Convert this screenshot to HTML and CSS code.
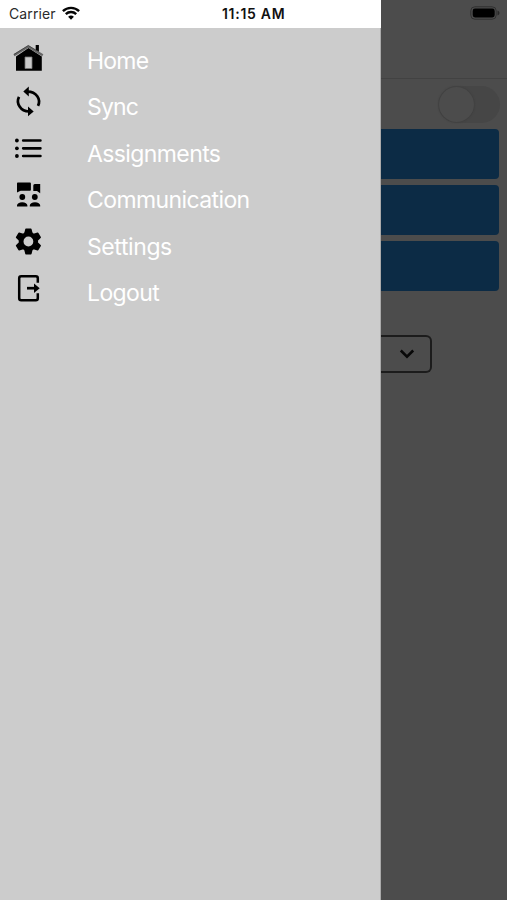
FILE: index.html
```html
<!DOCTYPE html>
<html lang="en">
<head>
<meta charset="utf-8">
<title>Menu</title>
<link rel="stylesheet" href="styles.css">
</head>
<body>
<div class="screen">
  <aside class="drawer">
    <header class="status">
      <span class="carrier">Carrier</span>
      <svg class="wifi" width="18" height="14" viewBox="0 0 18 14" fill="none" stroke="#050505" stroke-width="2.4"><path d="M.9 5.1a11.7 11.7 0 0 1 16.2 0M3.8 8.1a7.5 7.5 0 0 1 10.4 0"/><path d="M9 13.7 6.1 10.8a4.2 4.2 0 0 1 5.800 0z" fill="#050505" stroke="none"/></svg>
      <span class="time">11:15 AM</span>
    </header>
    <nav class="menu">
      <a class="item"><svg class="icon" viewBox="0 0 32 32"><path d="M4 15.500 16.500 7 29.800 15.500v14.200H4z"/><path d="M23.700 4h3.200v9l-3.200-2.500z"/><path d="M2 14.300 16.300 5.500l14.500 8.800" fill="none" stroke="#666" stroke-width="2.200"/><path d="M2 13.400 16.300 4.500l9 5.500" fill="none" stroke="#333" stroke-width=".7"/><path d="M13 16h7v11.500h-7z" fill="#c9c9c9" stroke="#777" stroke-width=".8"/></svg><span class="label home">Home</span></a>
      <a class="item"><svg class="icon" viewBox="0 0 32 32"><path d="M7 9.800C3.800 16 8.500 24.500 17 24.500M15.500 4.600c8.800 0 13.800 7.500 10.500 14.300" fill="none" stroke="#000" stroke-width="2.700"/><path d="m16.800-.5-5.500 5.100 5.500 5zM16 19.400l5.700 5.100-5.700 4.700z"/></svg><span class="label sync">Sync</span></a>
      <a class="item"><svg class="icon" viewBox="0 0 32 32"><circle cx="4.900" cy="6.500" r="1.900"/><circle cx="4.900" cy="14.300" r="1.900"/><circle cx="4.900" cy="22" r="1.900"/><path d="M11.200 6.500h17.200M11.200 14.300h17.200M11.200 22h17.200" stroke="#000" stroke-width="2.700" stroke-linecap="round"/></svg><span class="label assignments">Assignments</span></a>
      <a class="item"><svg class="icon" viewBox="0 0 32 32"><path d="M5.800 2.600H18q.9 0 .9.900v6.300q0 .9-.9.900H8.600L5 12.500V3.500q0-.9.800-.9zM22.800 4h5.400v9.200L25 11h-3.700V5.500q0-1.500 1.500-1.500z"/><circle cx="10.300" cy="17" r="2.900"/><circle cx="22.800" cy="17" r="2.900"/><path d="M5 26.500v-1c0-1.800 2.200-3.200 5.200-3.200s5.200 1.400 5.200 3.200v1zM17.800 26.500v-1c0-1.800 2.200-3.200 5.200-3.200s5.200 1.400 5.200 3.200v1z"/></svg><span class="label communication">Communication</span></a>
      <a class="item"><svg class="icon" viewBox="0 0 32 32"><g transform="translate(16.400 14.500)"><circle r="7.300" fill="none" stroke="#000" stroke-width="4.800"/><g id="teeth"><path id="tooth" d="M-4.200-8.200-3.200-12.300q.1-.7.800-.7h4.800q.7 0 .8.700l1 4.100z"/><use href="#tooth" transform="rotate(60)"/><use href="#tooth" transform="rotate(120)"/></g><use href="#teeth" transform="rotate(180)"/></g></svg><span class="label settings">Settings</span></a>
      <a class="item"><svg class="icon" viewBox="0 0 32 32"><path d="M25.800 9.800V5.200q0-2-2-2H9.200q-2 0-2 2V25.300q0 2 2 2h14.600q2 0 2-2v-5" fill="none" stroke="#000" stroke-width="2.500"/><path d="M15 15.200h8" stroke="#000" stroke-width="2.700"/><path d="m22 10.500 5.700 4.700-5.700 4.700z"/></svg><span class="label logout">Logout</span></a>
    </nav>
  </aside>
  <main class="page">
    <div class="topbar"><svg width="30" height="14" viewBox="0 0 30 14"><rect x=".8" y=".8" width="25.400" height="12.400" rx="4" fill="none" stroke="#303030"/><rect x="2.700" y="2.600" width="22" height="8.800" rx="2.300" fill="#000"/><path d="M27.500 4.500q2 .8 2 2.500t-2 2.500z" fill="#292929"/></svg></div>
    <div class="toggle-row"><div class="toggle"><div class="knob"></div></div></div>
    <div class="buttons"><div class="button"></div><div class="button"></div><div class="button"></div></div>
    <div class="select"><svg width="16" height="12" viewBox="0 0 16 12"><path d="m1.800 2.500 6.200 6.200 6.200-6.200" fill="none" stroke="#080808" stroke-width="2.600"/></svg></div>
  </main>
</div>
</body>
</html>
```
FILE: styles.css
```css
* { box-sizing: border-box; }
body { margin: 0; font-family: Inter, "Liberation Sans", sans-serif; }
.screen { display: grid; grid-template-columns: 381px 1fr; height: 900px; overflow: hidden; background: #4c4c4c; }
.drawer { background: #ccc; border-right: 1px solid #aaa; }
.status { display: flex; align-items: center; height: 28px; margin-right: -1px; padding-left: 9px; background: #fff; color: #111; font-size: 14px; line-height: 28px; white-space: nowrap; }
.carrier { width: 53px; color: #2b2b2b; letter-spacing: .1px; }
.wifi { margin-top: -2px; }
.time { margin-left: 142px; font-weight: 600; letter-spacing: .7px; }
.menu { padding-top: 13px; }
.item { display: flex; height: 46.4px; color: #fff; }
.icon { width: 32px; height: 32px; margin-left: 12px; flex: none; overflow: visible; }
.label { margin-left: 43px; font-size: 23px; line-height: 40px; letter-spacing: -.6px; white-space: nowrap; }
.home, .sync { letter-spacing: -.8px; }
.settings { letter-spacing: -.4px; }
.page { min-width: 0; }
.topbar { display: flex; justify-content: flex-end; height: 79px; padding: 6px 7px 0 0; border-bottom: 1px solid #424242; }
.toggle-row { display: flex; justify-content: flex-end; height: 50px; padding: 7px 7px 0 0; }
.toggle { width: 62px; height: 37px; border-radius: 19px; background: #464646; }
.knob { width: 35px; height: 35px; margin: 1px; border-radius: 50%; background: #4c4c4c; box-shadow: 0 0 2px #383838; }
.buttons { display: grid; gap: 6px; padding-right: 8px; }
.button { height: 50px; border-radius: 0 4px 4px 0; background: #0c2b45; }
.select { display: flex; align-items: center; justify-content: flex-end; width: 51px; height: 38px; margin-top: 44px; padding-right: 15px; border: 2px solid #1c1c1c; border-left: 0; border-radius: 0 6px 6px 0; }
```
